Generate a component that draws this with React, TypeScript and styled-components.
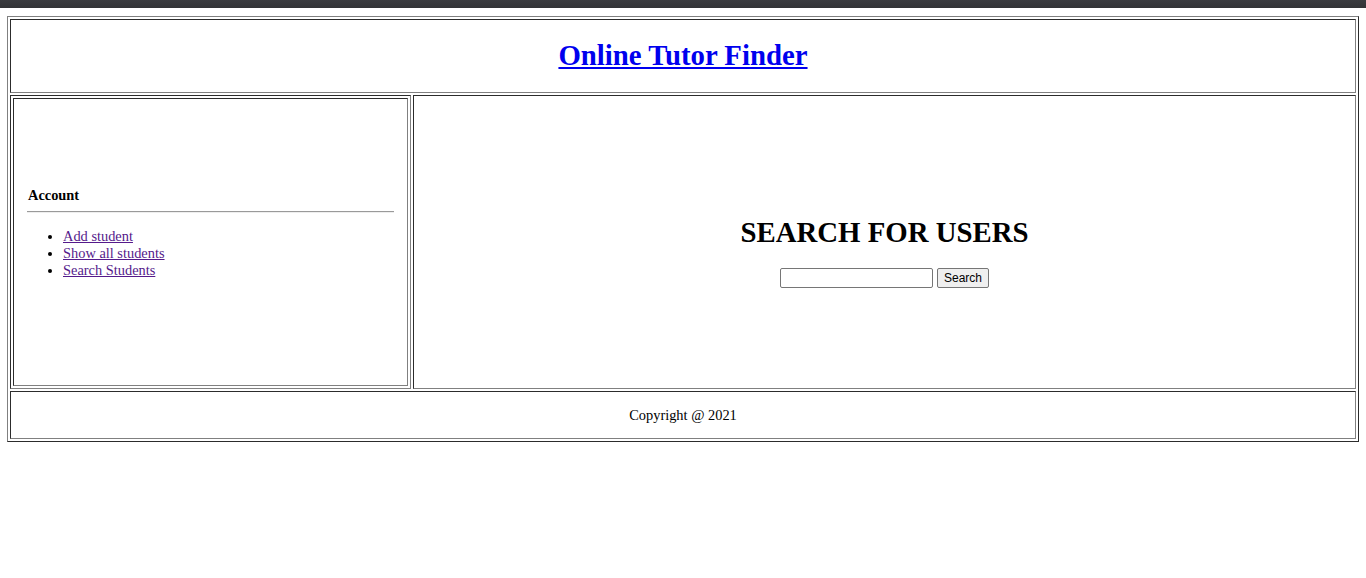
import React from "react";
import styled, { createGlobalStyle } from "styled-components";

const Global = createGlobalStyle`
  html, body { margin: 0; padding: 0; background: #ffffff; }
  body { font-family: "Liberation Serif", "Times New Roman", serif; font-size: 14.4px; color: #000; }
`;

const TopBar = styled.div`
  height: 8px;
  background: linear-gradient(#3a3b3f, #323336);
`;

const Page = styled.div`
  padding: 8px 8px 0 7px;
`;

const Frame = styled.table`
  width: 1352px;
  border: 1px outset #808080;
  border-spacing: 2px;
  border-collapse: separate;
`;

const Cell = styled.td<{ $width?: number; $height?: number; $pad?: number }>`
  border: 1px inset #808080;
  padding: ${(p) => (p.$pad ?? 1)}px;
  vertical-align: middle;
  text-align: center;
  ${(p) => (p.$width ? `width: ${p.$width}px;` : "")}
  ${(p) => (p.$height ? `height: ${p.$height}px;` : "")}
`;

const Title = styled.h1`
  font-size: 28.8px;
  font-weight: bold;
  margin: 18.3px 0;
  line-height: 33px;
  a { color: #0000ee; text-decoration: underline; }
`;

const Side = styled.table`
  width: 100%;
  height: 100%;
  border: 0;
  border-spacing: 1px;
`;

const SideCell = styled.td`
  border: 1px inset #808080;
  padding: 0 13px 22px;
  text-align: left;
  vertical-align: middle;
`;

const SideHead = styled.h4`
  font-size: 14.4px;
  font-weight: bold;
  margin: 19px 1px 7px;
  line-height: 17px;
`;

const Rule = styled.hr`
  margin: 0;
  border: 0;
  border-top: 1px solid #9a9a9a;
  border-bottom: 1px solid #eeeeee;
`;

const Links = styled.ul`
  margin: 15.4px 0 14.4px 0;
  padding-left: 36px;
  line-height: 17px;
  a { color: #551a8b; text-decoration: underline; }
`;

const SearchTitle = styled.h1`
  font-size: 28.8px;
  font-weight: bold;
  margin: 20.8px 0 18.5px;
  line-height: 33px;
`;

const SearchForm = styled.form`
  display: flex;
  justify-content: center;
  gap: 4px;
  margin: 0;
`;

const TextInput = styled.input`
  width: 153px;
  height: 20px;
  box-sizing: border-box;
  border: 1px solid #767676;
  border-radius: 2px;
  padding: 1px 2px;
  font: 12px "Liberation Sans", Arial, sans-serif;
`;

const Button = styled.button`
  height: 20px;
  box-sizing: border-box;
  border: 1px solid #767676;
  border-radius: 2px;
  background: #efefef;
  padding: 0 6px;
  font: 12px "Liberation Sans", Arial, sans-serif;
  color: #000;
`;

const Footer = styled.p`
  margin: 14px 0;
  line-height: 16px;
`;

export default function App() {
  return (
    <>
      <Global />
      <TopBar />
      <Page>
        <Frame>
          <tbody>
            <tr>
              <Cell colSpan={2}>
                <Title>
                  <a href="#">Online Tutor Finder</a>
                </Title>
              </Cell>
            </tr>
            <tr>
              <Cell $width={397} $height={290}>
                <Side>
                  <tbody>
                    <tr>
                      <SideCell>
                        <SideHead>Account</SideHead>
                        <Rule />
                        <Links>
                          <li><a href="#">Add student</a></li>
                          <li><a href="#">Show all students</a></li>
                          <li><a href="#">Search Students</a></li>
                        </Links>
                      </SideCell>
                    </tr>
                  </tbody>
                </Side>
              </Cell>
              <Cell>
                <SearchTitle>SEARCH FOR USERS</SearchTitle>
                <SearchForm onSubmit={(e) => e.preventDefault()}>
                  <TextInput type="text" />
                  <Button type="submit">Search</Button>
                </SearchForm>
              </Cell>
            </tr>
            <tr>
              <Cell colSpan={2}>
                <Footer>Copyright @ 2021</Footer>
              </Cell>
            </tr>
          </tbody>
        </Frame>
      </Page>
    </>
  );
}
